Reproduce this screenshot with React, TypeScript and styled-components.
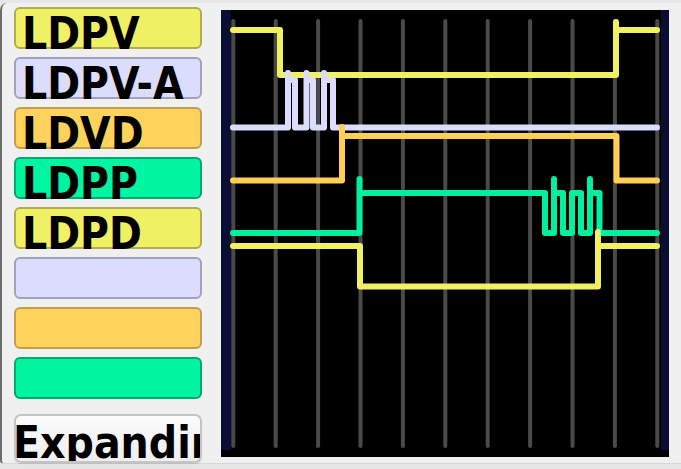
import { ReactElement } from 'react'
import styled, { createGlobalStyle } from 'styled-components'

const GlobalStyle = createGlobalStyle`
  html, body {
    margin: 0;
    padding: 0;
    background: #e6e6e6;
    width: 681px;
    height: 469px;
    overflow: hidden;
  }
`

type Tone = { fill: string; border: string; line: string }

const tones: Record<string, Tone> = {
  yellow: { fill: '#f0f064', border: '#b4ac50', line: '#f0f060' },
  lavender: { fill: '#dcdcfc', border: '#a2a2bc', line: '#dcdcff' },
  orange: { fill: '#ffd25c', border: '#c0a04e', line: '#ffd054' },
  green: { fill: '#00f5a0', border: '#00a872', line: '#00f0a0' },
}

const labelFont = `
  font-family: 'DejaVu Sans Condensed', 'DejaVu Sans', sans-serif;
  font-stretch: condensed;
  font-weight: bold;
  font-size: 44px;
  color: #000;
  white-space: nowrap;
`

const Frame = styled.div`
  display: flex;
  margin-top: 3px;
  height: 461px;
  box-sizing: border-box;
  padding: 4px 0 0 12px;
  gap: 19px;
  background: #f0f0f0;
  border-left: 2px solid #6c6c6c;
  border-bottom: 1px solid #d6d6d6;
  border-top-left-radius: 7px;
  border-bottom-left-radius: 4px;
`

const Sidebar = styled.div`
  display: flex;
  flex-direction: column;
  gap: 8px;
  width: 188px;
`

const SignalButton = styled.button<{ $tone: Tone }>`
  ${labelFont}
  display: block;
  height: 42px;
  width: 100%;
  box-sizing: border-box;
  margin: 0;
  padding: 0 0 0 6px;
  text-align: left;
  background: ${(p) => p.$tone.fill};
  border: 2px solid ${(p) => p.$tone.border};
  border-radius: 6px;
  line-height: 49px;
  overflow: visible;
`

const ExpandButton = styled.button`
  ${labelFont}
  display: block;
  height: 49px;
  width: 100%;
  box-sizing: border-box;
  margin: 7px 0 0;
  padding: 0;
  text-align: left;
  text-indent: -3px;
  background: linear-gradient(#fbfbfb, #efefef);
  border: 2px solid #c4c4c4;
  border-radius: 7px;
  box-shadow: 0 1px 1px rgba(0, 0, 0, 0.12);
  line-height: 54px;
  overflow: hidden;
`

const ChartPanel = styled.div`
  margin-top: 3px;
  width: 448px;
  height: 447px;
  background-color: #000;
  background-image: linear-gradient(
    to right,
    #0b0e33 10px,
    #000 10px,
    #000 calc(100% - 8px),
    #0b0e33 calc(100% - 8px)
  );
  background-size: 100% 440px;
  background-repeat: no-repeat;
`

const Chart = styled.svg`
  display: block;
  width: 448px;
  height: 447px;
`

const gridX = Array.from({ length: 11 }, (_, i) => 233.3 + i * 42.4)

const traces: { tone: Tone; d: string }[] = [
  { tone: tones.yellow, d: 'M233 30 H280 V75 H616 V22 M616 30 H657' },
  {
    tone: tones.lavender,
    d:
      'M233 127.5 H288 V73 M288 80 H295 V127.5 H306.5 V73 M306.5 80 H313 V127.5 H324 V73 M324 80 H333 V127.5 H657',
  },
  { tone: tones.orange, d: 'M233 180.5 H342 V127 M342 136 H616.5 V180.5 H657' },
  {
    tone: tones.green,
    d:
      'M233 233 H359.5 V179 M359.5 193 H545 V233 H554 V179 M554 193 H563 V233 H572 V193 H581 V233 H590 V179 M590 193 H599.5 V233 H657',
  },
  { tone: tones.yellow, d: 'M233 246 H360 V286.5 H598 V232 M598 246 H657' },
]

const signals = [
  { label: 'LDPV', tone: tones.yellow },
  { label: 'LDPV-A', tone: tones.lavender },
  { label: 'LDVD', tone: tones.orange },
  { label: 'LDPP', tone: tones.green },
  { label: 'LDPD', tone: tones.yellow },
  { label: '', tone: tones.lavender },
  { label: '', tone: tones.orange },
  { label: '', tone: tones.green },
]

export default function App(): ReactElement {
  return (
    <>
      <GlobalStyle />
      <Frame>
        <Sidebar>
          {signals.map((s, i) => (
            <SignalButton key={i} $tone={s.tone}>
              {s.label}
            </SignalButton>
          ))}
          <ExpandButton>Expandir</ExpandButton>
        </Sidebar>
        <ChartPanel>
          <Chart viewBox="221 10 448 447">
            {gridX.map((x) => (
              <line
                key={x}
                x1={x}
                x2={x}
                y1={21}
                y2={446}
                stroke="#4a4a4a"
                strokeWidth={4}
                strokeLinecap="round"
              />
            ))}
            {traces.map((t, i) => (
              <path
                key={i}
                d={t.d}
                fill="none"
                stroke={t.tone.line}
                strokeWidth={6}
                strokeLinecap="round"
                strokeLinejoin="round"
              />
            ))}
          </Chart>
        </ChartPanel>
      </Frame>
    </>
  )
}
